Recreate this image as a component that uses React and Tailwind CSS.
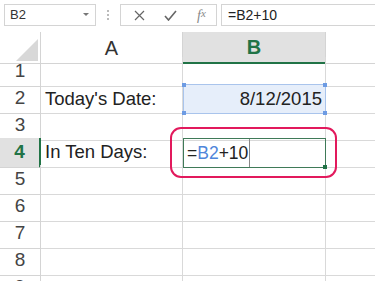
import React from "react";

const rows = [1, 2, 3, 4, 5, 6, 7, 8, 9];

const Handle = ({ className }) => (
  <span className={`absolute w-[4px] h-[4px] bg-[#6d9be3] ${className}`} />
);

export default function App() {
  return (
    <div className="relative w-[375px] h-[281px] overflow-hidden bg-white font-['Liberation_Sans',Arial,sans-serif] text-[#222]">
      {/* formula bar */}
      <div className="flex h-[32px] items-start pl-[4px] pt-[4px]">
        <div className="flex h-[22px] w-[92px] items-center justify-between border border-[#d4d4d4] pl-[5px] pr-[6px] text-[13px] text-[#333]">
          <span>B2</span>
          <svg width="6" height="4" viewBox="0 0 6 4">
            <path d="M0 0h6L3 3z" fill="#777" />
          </svg>
        </div>
        <div className="flex h-[22px] w-[24px] flex-col items-center justify-center gap-[2px]">
          <span className="h-[2px] w-[2px] bg-[#bbb]" />
          <span className="h-[2px] w-[2px] bg-[#bbb]" />
          <span className="h-[2px] w-[2px] bg-[#bbb]" />
        </div>
        <div className="flex h-[22px] w-[97px] items-center border border-[#d4d4d4]">
          <div className="flex w-[30px] justify-center pl-[6px]">
            <svg width="11" height="11" viewBox="0 0 11 11">
              <path d="M1 1l9 9M10 1l-9 9" stroke="#666" strokeWidth="1.2" />
            </svg>
          </div>
          <div className="flex w-[34px] justify-center pl-[4px]">
            <svg width="13" height="11" viewBox="0 0 13 11">
              <path d="M1 6l3.5 4L12 1" stroke="#666" strokeWidth="1.6" fill="none" />
            </svg>
          </div>
          <div className="flex w-[31px] justify-center pl-[2px] font-['Liberation_Serif',serif] text-[14px] italic text-[#888]">
            f<span className="text-[11px]">x</span>
          </div>
        </div>
        <div className="ml-[4px] flex h-[22px] flex-1 items-center border border-r-0 border-[#d4d4d4] pl-[6px] text-[14px] text-[#222]">
          =B2+10
        </div>
      </div>

      {/* column headers */}
      <div className="grid h-[25px] grid-cols-[41px_142px_143px_1fr] text-[20px]">
        <div className="flex items-end justify-end border-r border-b border-[#d4d4d4] pb-[2px] pr-[2px]">
          <svg width="22" height="22" viewBox="0 0 22 22">
            <path d="M22 0v22H0z" fill="#d8d8d8" />
          </svg>
        </div>
        <div className="flex items-center justify-center border-r border-b border-[#d4d4d4] text-[#333]">
          A
        </div>
        <div className="flex items-center justify-center border-r border-b-2 border-r-[#d4d4d4] border-b-[#217346] bg-[#e1e1e1] font-bold text-[#217346]">
          B
        </div>
        <div className="border-b border-[#d4d4d4]" />
      </div>

      {/* rows */}
      {rows.map((r) => (
        <div key={r} className="grid h-[27px] grid-cols-[41px_142px_143px_1fr] text-[18.5px]">
          <div
            className={
              r === 4
                ? "flex items-center justify-center border-r-2 border-b border-r-[#217346] border-b-[#d4d4d4] bg-[#e1e1e1] text-[19px] font-bold text-[#217346]"
                : "flex items-center justify-center border-r border-b border-[#d4d4d4] text-[19px] text-[#444]"
            }
          >
            {r}
          </div>
          <div className="flex items-center border-r border-b border-[#d9d9d9] pl-[4px]">
            {r === 2 && "Today's Date:"}
            {r === 4 && "In Ten Days:"}
          </div>
          {r === 2 ? (
            <div className="relative flex items-center justify-end border border-[#a9c4ec] bg-[#e6eefa] pr-[3px]">
              8/12/2015
              <Handle className="-left-[2px] -top-[2px]" />
              <Handle className="-right-[2px] -top-[2px]" />
              <Handle className="-left-[2px] -bottom-[2px]" />
              <Handle className="-right-[2px] -bottom-[2px]" />
            </div>
          ) : r === 4 ? (
            <div className="relative flex items-center border border-[#3f7a58] pl-[3px] text-[17.5px]">
              <span>=</span>
              <span className="text-[#4f86da]">B2</span>
              <span>+10</span>
              <span className="ml-[1px] h-full w-px bg-[#888]" />
              <span className="absolute -bottom-[2px] -right-[2px] h-[4px] w-[4px] bg-[#217346]" />
            </div>
          ) : (
            <div className="border-r border-b border-[#d9d9d9]" />
          )}
          <div className="border-b border-[#d9d9d9]" />
        </div>
      ))}

      {/* highlight callout */}
      <div className="absolute left-[170px] top-[127px] h-[51px] w-[167px] rounded-[11px] border-2 border-[#e2195c]" />
    </div>
  );
}
